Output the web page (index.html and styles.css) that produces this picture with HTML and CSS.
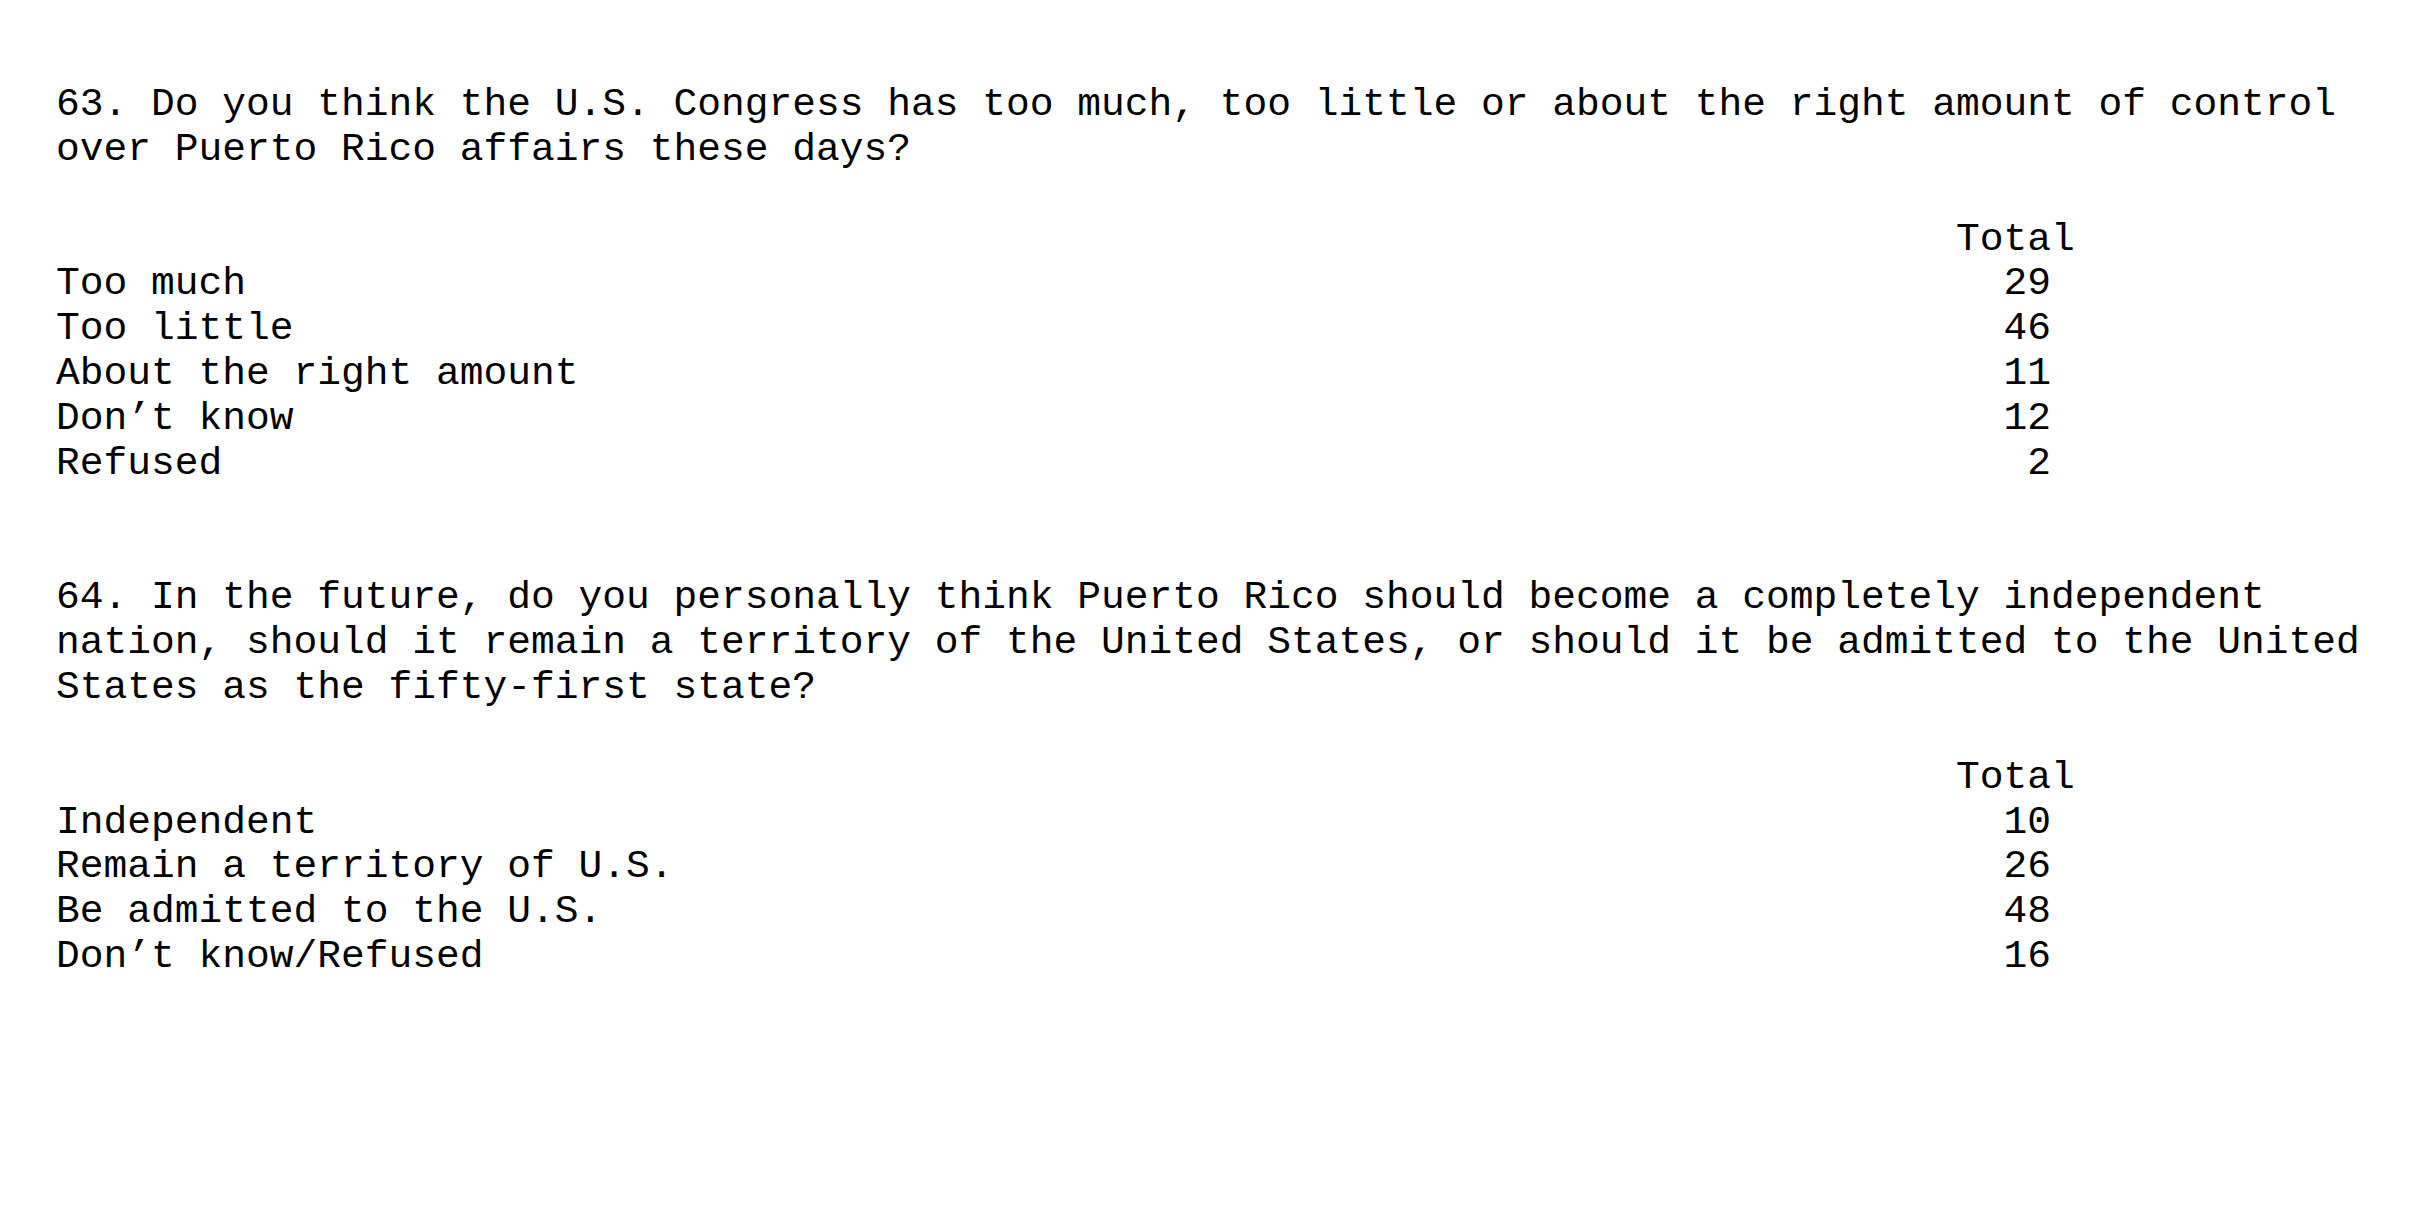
FILE: index.html
```html
<!DOCTYPE html>
<html lang="en">
<head>
    <meta charset="UTF-8">
    <title>Puerto Rico survey - questions 63 and 64</title>
    <link rel="stylesheet" href="styles.css">
</head>
<body>
    <main class="page">
        <section class="question">
            <p class="prompt">63. Do you think the U.S. Congress has too much, too little or about the right amount of control over Puerto Rico affairs these days?</p>
            <div class="results">
                <div class="row head"><span></span><span class="total">Total</span></div>
                <div class="row"><span>Too much</span><span class="num">29</span></div>
                <div class="row"><span>Too little</span><span class="num">46</span></div>
                <div class="row"><span>About the right amount</span><span class="num">11</span></div>
                <div class="row"><span>Don’t know</span><span class="num">12</span></div>
                <div class="row"><span>Refused</span><span class="num">2</span></div>
            </div>
        </section>

        <section class="question">
            <p class="prompt">64. In the future, do you personally think Puerto Rico should become a completely independent nation, should it remain a territory of the United States, or should it be admitted to the United States as the fifty-first state?</p>
            <div class="results">
                <div class="row head"><span></span><span class="total">Total</span></div>
                <div class="row"><span>Independent</span><span class="num">10</span></div>
                <div class="row"><span>Remain a territory of U.S.</span><span class="num">26</span></div>
                <div class="row"><span>Be admitted to the U.S.</span><span class="num">48</span></div>
                <div class="row"><span>Don’t know/Refused</span><span class="num">16</span></div>
            </div>
        </section>
    </main>
</body>
</html>
```

FILE: styles.css
```css
body {
    margin: 0;
    padding: 0;
    background-color: #ffffff;
    color: #000000;
    font-family: 'Liberation Mono', 'Courier New', monospace;
    font-size: 39.6px;
    line-height: 44.85px;
}

.page {
    padding: 83px 0 0 56px;
}

/* one blank line after the prompt, two after each block of results */
.question {
    margin-bottom: 89.7px;
}

.prompt {
    margin: 0 0 44.85px 0;
    width: 99ch;
}

.row {
    display: grid;
    grid-template-columns: 80ch 5ch;
    white-space: pre;
}

.total {
    text-align: left;
}

.num {
    text-align: right;
    padding-right: 1ch;
}
```
